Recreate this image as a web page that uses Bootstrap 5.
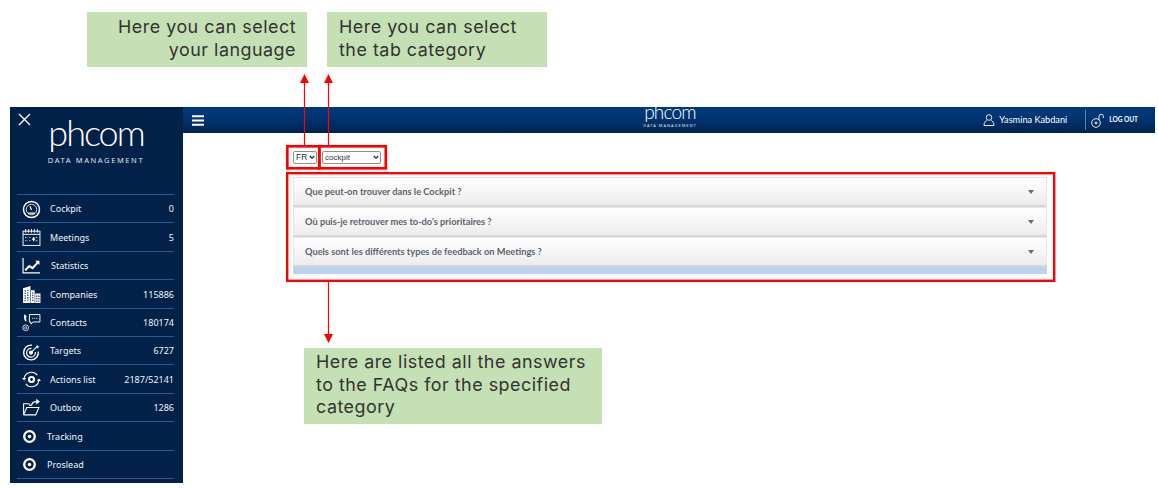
<!DOCTYPE html>
<html lang="fr">
<head>
    <meta charset="UTF-8">
    <title>Phcom FAQ</title>
    <link href="https://cdn.jsdelivr.net/npm/bootstrap@5.3.3/dist/css/bootstrap.min.css" rel="stylesheet">
    <style>
        body { margin: 0; background: #fff; font-family: "Lato", sans-serif; height: 488px; overflow: hidden; position: relative; }
        .app-frame { margin: 107px 3px 0 10px; height: 376px; }
        .side-panel { width: 173px; background: #012148; color: #fff; flex: none; padding: 0 9px 0 7px; position: relative; }
        .close-x { position: absolute; left: 8px; top: 6px; width: 13px; height: 13px; }
        .side-logo { height: 87px; text-align: center; padding-left: 1px; }
        .logo-word { font-family: "Lato", sans-serif; font-weight: 300; font-size: 36px; letter-spacing: -2px; line-height: 45px; padding-top: 3px; display: block; }
        .logo-sub { font-family: "Noto Sans", sans-serif; font-size: 7.5px; line-height: 10px; letter-spacing: 1.6px; display: block; color: #dfe6ee; }
        .side-menu { border-top: 1px solid #2b5a92; }
        .side-row { height: 28.4px; border-bottom: 1px solid #2b5a92; font-family: "Noto Sans", sans-serif; font-size: 9px; color: #f2f5f8; padding: 1px 0 0 5px; }
        .side-row svg { width: 19px; height: 19px; flex: none; margin-right: 9px; }
        .side-row.wide-gap svg { margin-right: 10px; }
        .side-row.dot-row svg { width: 15px; height: 15px; margin-right: 10px; }
        .main-area { min-width: 0; }
        .top-strip { height: 26px; background: linear-gradient(#003a7a, #003470 45%, #00224f); color: #fff; position: relative; }
        .burger { width: 12px; height: 11px; margin-left: 9px; }
        .mid-logo { position: absolute; left: 460px; top: -7px; width: 54px; text-align: center; }
        .mid-logo .logo-word { font-size: 19px; line-height: 23px; padding: 0; letter-spacing: -.8px; }
        .mid-logo .logo-sub { font-size: 4px; line-height: 5px; letter-spacing: 1px; margin-top: 0; white-space: nowrap; }
        .user-part { font-size: 9.2px; margin-right: 18px; }
        .user-part svg { width: 12px; height: 12px; margin-right: 4px; }
        .log-part { border-left: 1px solid #5f83ad; height: 20px; padding-left: 5px; margin-right: 17px; font-size: 6.5px; font-weight: 700; }
        .log-part svg { width: 13px; height: 15px; margin-right: 5px; }
        .filter-row { padding: 18px 0 0 110px; height: 44px; }
        .filter-row select { appearance: none; font-family: "Liberation Sans", sans-serif; height: 13px; line-height: 11px; padding: 0 0 0 2px; border: 1px solid #8f8f8f; border-radius: 2px; color: #333; background: #fff url("data:image/svg+xml,%3csvg xmlns='http://www.w3.org/2000/svg' viewBox='0 0 8 6'%3e%3cpath fill='none' stroke='%23222' stroke-width='1.6' d='M1 1l3 3 3-3'/%3e%3c/svg%3e") no-repeat right 1px center / 6px 5px; }
        .lang-pick { font-size: 8.5px; width: 24px; margin-right: 5px; }
        .tab-pick { font-size: 8px; width: 59px; }
        .faq-block { margin-left: 110px; width: 754px; }
        .faq-item { height: 30px; border: 1px solid #e6e6e6; border-bottom: 2px solid #d6d6d6; background: linear-gradient(#fff, #ececec); padding: 1px 12px 0 11px; font-size: 9.25px; font-weight: 700; color: #5c6370; }
        .faq-item:last-of-type { height: 29px; border-bottom: 1px solid #e0e0e0; }
        .faq-caret { width: 0; height: 0; border-left: 3.5px solid transparent; border-right: 3.5px solid transparent; border-top: 4px solid #646c7c; }
        .faq-strip { height: 7px; background: #bcd3ec; }
        .note-box { position: absolute; background: #c5e0b4; color: #333; font-family: "Inter", sans-serif; font-size: 17.9px; letter-spacing: .5px; line-height: 22.5px; }
        .note-lang { left: 87px; top: 12px; width: 220px; height: 55px; padding: 4px 11px 0 0; text-align: right; }
        .note-tab { left: 327px; top: 12px; width: 220px; height: 55px; padding: 4px 0 0 12px; }
        .note-answers { left: 304px; top: 348px; width: 298px; height: 76px; padding: 3px 0 0 12px; }
        .mark-layer { position: absolute; left: 0; top: 0; width: 1158px; height: 488px; pointer-events: none; }
    </style>
</head>
<body>

    <div class="app-frame d-flex">
        <!-- sidebar -->
        <div class="side-panel">
            <svg class="close-x" viewBox="0 0 13 13"><path d="M1 1L12 12M12 1L1 12" stroke="#fff" stroke-width="1.3" fill="none"/></svg>
            <div class="side-logo">
                <span class="logo-word">phcom</span>
                <span class="logo-sub">DATA MANAGEMENT</span>
            </div>
            <div class="side-menu">
                <div class="side-row d-flex align-items-center justify-content-between">
                    <span class="d-flex align-items-center">
                        <svg viewBox="0 0 18 18" fill="none" stroke="#fff"><circle cx="9" cy="9" r="7.6" stroke-width="1.4"/><circle cx="9" cy="9" r="5" stroke-width=".8"/><path d="M9 9.5L7.6 6M6 12.5h6" stroke-width="1.2"/></svg>Cockpit</span><span>0</span>
                </div>
                <div class="side-row d-flex align-items-center justify-content-between">
                    <span class="d-flex align-items-center">
                        <svg viewBox="0 0 18 18" fill="none" stroke="#fff" stroke-width=".9"><rect x="1" y="3" width="16" height="13.5"/><path d="M1 6h16M3.5 1v3.5M6.3 1v3.5M9 1v3.5M11.7 1v3.5M14.5 1v3.5" /><path d="M3 9h2M3 12h2M7 9h1.500M7 12h1.500M13 9h2M13 12h2" stroke-dasharray="1 .7"/><path d="M11 8.500v4M9.500 10.500h3" stroke-width="1.200"/></svg>Meetings</span><span>5</span>
                </div>
                <div class="side-row wide-gap d-flex align-items-center justify-content-between">
                    <span class="d-flex align-items-center">
                        <svg viewBox="0 0 18 18" fill="none" stroke="#fff"><path d="M1 2v14h16" stroke-width="1.100"/><path d="M3 13.500L7 9.500l3 2L15.500 5.500" stroke-width="2"/><path d="M12.500 4.500h4v4z" fill="#fff" stroke="none"/></svg>Statistics</span>
                </div>
                <div class="side-row d-flex align-items-center justify-content-between">
                    <span class="d-flex align-items-center">
                        <svg viewBox="0 0 18 18"><path fill="#fff" d="M1 3l7-2v16H1zM8.500 5h3.500v12H8.500zM12.500 8h5v9h-5z"/><path stroke="#012148" stroke-width="1" stroke-dasharray="1.300 1" fill="none" d="M3 5v11M5.500 4.500V16M10.200 7v9M14 10v6M16 10v6"/></svg>Companies</span><span>115886</span>
                </div>
                <div class="side-row d-flex align-items-center justify-content-between">
                    <span class="d-flex align-items-center">
                        <svg viewBox="0 0 18 18" fill="none" stroke="#fff"><path d="M2.500 1c-.9 1.500-.9 5 .6 7l1.400-1-1-2.200L4.500 3.500z" fill="#fff" stroke="none"/><circle cx="3.500" cy="14" r="2.700" stroke-width=".8"/><circle cx="3.500" cy="14" r="1" stroke-width=".7"/><path d="M7 1.500h10v7h-6.500L8.500 10.500v-2H7z" stroke-width=".9"/><path d="M9.500 5h5" stroke-width="1" stroke-dasharray="1 1"/></svg>Contacts</span><span>180174</span>
                </div>
                <div class="side-row d-flex align-items-center justify-content-between">
                    <span class="d-flex align-items-center">
                        <svg viewBox="0 0 18 18" fill="none" stroke="#fff"><path d="M9.500 3A7 7 0 1 0 15.500 9" stroke-width="1.300"/><path d="M9 6A4.200 4.200 0 1 0 12.700 9.500" stroke-width="1.100"/><circle cx="8.500" cy="10" r="1.500" fill="#fff"/><path d="M8.500 10L15 3.500" stroke-width="1"/><path d="M13 1.500l1 2.500 2.800.6-2.400 1.400z" fill="#fff" stroke="none"/></svg>Targets</span><span>6727</span>
                </div>
                <div class="side-row d-flex align-items-center justify-content-between">
                    <span class="d-flex align-items-center">
                        <svg viewBox="0 0 18 18" fill="none" stroke="#fff"><path d="M2 8A7 7 0 0 1 14.500 5M16 10A7 7 0 0 1 3.500 13" stroke-width="1"/><path d="M0 7.500h4L2 10zM14 10.500h4L16 8z" fill="#fff" stroke="none"/><circle cx="9" cy="9" r="2.400" stroke-width="2"/></svg>Actions list</span><span>2187/52141</span>
                </div>
                <div class="side-row d-flex align-items-center justify-content-between">
                    <span class="d-flex align-items-center">
                        <svg viewBox="0 0 18 18" fill="none" stroke="#fff" stroke-width="1"><path d="M1.500 16V5.500h5l1 1.500H9M1.500 16h11.500l3-7H4.500L1.500 16"/><path d="M9 7C9.500 4.500 11.500 3.500 14 3.500" stroke-width="1.200"/><path d="M13.500 .8L17 3.500l-3.500 2.700z" fill="#fff" stroke="none"/></svg>Outbox</span><span>1286</span>
                </div>
                <div class="side-row dot-row d-flex align-items-center">
                    <svg viewBox="0 0 15 15" fill="none" stroke="#fff"><circle cx="7.500" cy="7.500" r="5.300" stroke-width="2.300"/><circle cx="7.500" cy="7.500" r="1.800" fill="#fff" stroke="none"/></svg>Tracking
                </div>
                <div class="side-row dot-row d-flex align-items-center">
                    <svg viewBox="0 0 15 15" fill="none" stroke="#fff"><circle cx="7.500" cy="7.500" r="5.300" stroke-width="2.300"/><circle cx="7.500" cy="7.500" r="1.800" fill="#fff" stroke="none"/></svg>Proslead
                </div>
            </div>
        </div>

        <!-- main part -->
        <div class="main-area flex-grow-1">
            <div class="top-strip d-flex align-items-center">
                <svg class="burger" viewBox="0 0 12 11"><path d="M0 1.200h12M0 5.500h12M0 9.800h12" stroke="#fff" stroke-width="2"/></svg>
                <div class="mid-logo">
                    <span class="logo-word">phcom</span>
                    <span class="logo-sub">DATA MANAGEMENT</span>
                </div>
                <div class="ms-auto d-flex align-items-center">
                    <div class="user-part d-flex align-items-center">
                        <svg viewBox="0 0 12 12" fill="none" stroke="#fff" stroke-width=".9"><circle cx="6" cy="3.500" r="2.800"/><path d="M1 11.500c0-3 1.500-4.500 2.800-5M11 11.500c0-3-1.500-4.500-2.800-5M1 11.500h10"/></svg>Yasmina Kabdani
                    </div>
                    <div class="log-part d-flex align-items-center">
                        <svg viewBox="0 0 13 15" fill="none" stroke="#fff" stroke-width=".9"><circle cx="5" cy="10" r="4.300"/><circle cx="5" cy="10" r="1"/><path d="M8 7V3.500a2.200 2.200 0 0 1 4.400 0V5"/></svg>LOG OUT
                    </div>
                </div>
            </div>

            <div class="filter-row d-flex align-items-start">
                <select class="lang-pick"><option>FR</option><option>EN</option></select>
                <select class="tab-pick"><option>cockpit</option><option>meetings</option></select>
            </div>

            <div class="faq-block">
                <div class="faq-item d-flex align-items-center justify-content-between">Que peut-on trouver dans le Cockpit ?<span class="faq-caret"></span></div>
                <div class="faq-item d-flex align-items-center justify-content-between">Où puis-je retrouver mes to-do's prioritaires ?<span class="faq-caret"></span></div>
                <div class="faq-item d-flex align-items-center justify-content-between">Quels sont les différents types de feedback on Meetings ?<span class="faq-caret"></span></div>
                <div class="faq-strip"></div>
            </div>
        </div>
    </div>

    <!-- annotations over the screenshot -->
    <div class="note-box note-lang">Here you can select<br>your language</div>
    <div class="note-box note-tab">Here you can select<br>the tab category</div>
    <div class="note-box note-answers">Here are listed all the answers<br>to the FAQs for the specified<br>category</div>

    <svg class="mark-layer" viewBox="0 0 1158 488" fill="none" stroke="#f00">
        <rect x="287.300" y="146.300" width="32" height="22" stroke-width="2.700"/>
        <rect x="319.300" y="146.300" width="66.500" height="22" stroke-width="2.700"/>
        <rect x="287.200" y="173.200" width="767" height="107.600" stroke-width="2.400"/>
        <path d="M304.500 145V82M328.500 145V82M328.500 282V335" stroke-width="1.200"/>
        <path d="M300 83h9l-4.500-9zM324 83h9l-4.500-9zM324 334h9l-4.500 9z" fill="#f00" stroke="none"/>
    </svg>

    <script src="https://cdn.jsdelivr.net/npm/bootstrap@5.3.3/dist/js/bootstrap.bundle.min.js"></script>
</body>
</html>
